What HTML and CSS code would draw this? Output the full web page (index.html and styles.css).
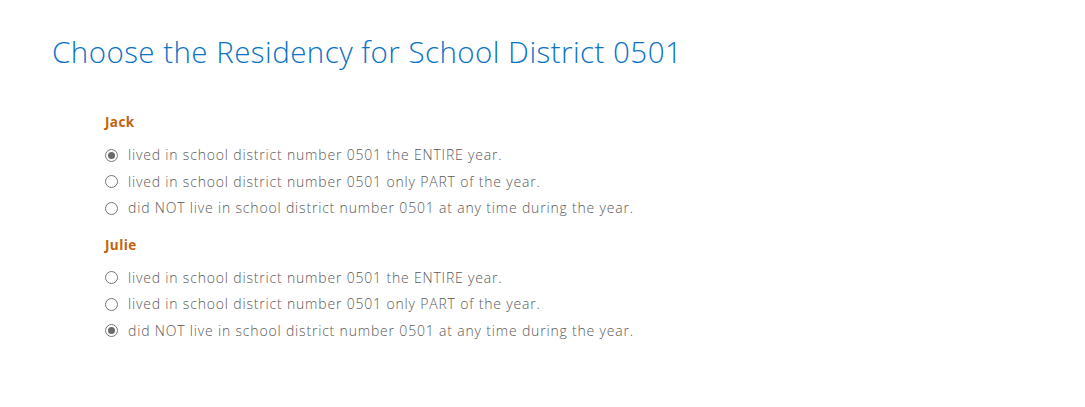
FILE: index.html
```html
<!DOCTYPE html>
<html>
<head>
<meta charset="utf-8">
<link rel="stylesheet" href="styles.css">
</head>
<body>
<div class="page">
  <h1 class="title">Choose the Residency for School District 0501</h1>
  <div class="groups">
    <div class="group">
      <div class="name">Jack</div>
      <label class="opt"><span class="radio checked"></span><span>lived in school district number 0501 the ENTIRE year.</span></label>
      <label class="opt"><span class="radio"></span><span>lived in school district number 0501 only PART of the year.</span></label>
      <label class="opt"><span class="radio"></span><span>did NOT live in school district number 0501 at any time during the year.</span></label>
    </div>
    <div class="group">
      <div class="name">Julie</div>
      <label class="opt"><span class="radio"></span><span>lived in school district number 0501 the ENTIRE year.</span></label>
      <label class="opt"><span class="radio"></span><span>lived in school district number 0501 only PART of the year.</span></label>
      <label class="opt"><span class="radio checked"></span><span>did NOT live in school district number 0501 at any time during the year.</span></label>
    </div>
  </div>
</div>
</body>
</html>
```
FILE: styles.css
```css
html, body { margin: 0; padding: 0; background: #fff; }
body { font-family: "Open Sans", "Noto Sans", sans-serif; }
.page { padding: 32px 0 0 52px; }
.title {
  margin: 0;
  font-weight: 300;
  font-size: 29.5px;
  letter-spacing: 0.46px;
  line-height: 40px;
  color: #0b73c6;
}
.groups { padding: 40px 0 0 53px; }
.group { display: flex; flex-direction: column; }
.group + .group { margin-top: 13px; }
.name {
  font-weight: 700;
  font-size: 13.5px;
  letter-spacing: 0.4px;
  line-height: 20px;
  color: #c4620c;
  margin-bottom: 10px;
}
.opt {
  display: flex;
  align-items: center;
  gap: 10px;
  font-weight: 300;
  font-size: 14px;
  letter-spacing: 0.82px;
  line-height: 26.5px;
  color: #5a5a5a;
}
.radio {
  box-sizing: border-box;
  width: 13px; height: 13px;
  border: 1px solid #777;
  border-radius: 50%;
  background: #fff;
  display: flex; align-items: center; justify-content: center;
}
.radio.checked::after {
  content: "";
  width: 7px; height: 7px;
  border-radius: 50%;
  background: #6a6a6a;
}
```
